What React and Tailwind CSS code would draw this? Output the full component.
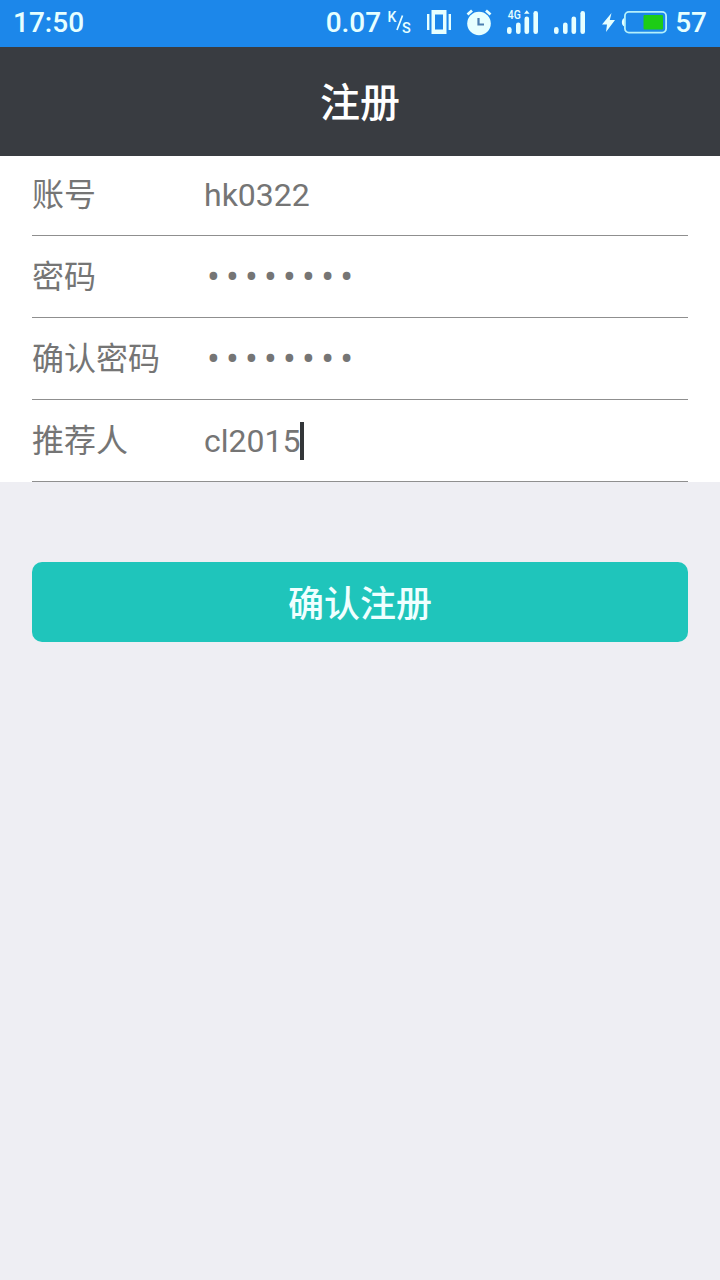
import clsx from 'clsx';

const fields = [
  { label: '账号', value: 'hk0322' },
  { label: '密码', value: '••••••••', secret: true },
  { label: '确认密码', value: '••••••••', secret: true },
  { label: '推荐人', value: 'cl2015', focused: true },
];

function NetSpeed() {
  return (
    <div className="flex items-center">
      <span className="pt-[2px]">0.07</span>
      <svg
        width="26"
        height="28"
        viewBox="0 0 26 28"
        className="ml-[6px] overflow-visible"
      >
        <text x="0.5" y="13.5" fontSize="14" fill="currentColor">
          K
        </text>
        <path d="M15.5 7.5 10 22" stroke="currentColor" strokeWidth="1.7" />
        <text x="15" y="24.5" fontSize="14.5" fill="currentColor">
          S
        </text>
      </svg>
    </div>
  );
}

function VibrateIcon() {
  return (
    <svg width="24" height="26" viewBox="0 0 24 26" fill="currentColor">
      <rect x="0" y="5" width="2.4" height="16" />
      <rect x="21.6" y="5" width="2.4" height="16" />
      <path fillRule="evenodd" d="M4.5 1h15v24h-15zM8 5.5v15h8v-15z" />
    </svg>
  );
}

function AlarmIcon() {
  return (
    <svg width="26" height="28" viewBox="0 0 26 28">
      <circle cx="13" cy="15.5" r="11.8" fill="currentColor" />
      <path
        d="M1.5 6.5 6 2.5M24.5 6.5 20 2.5"
        stroke="currentColor"
        strokeWidth="2.8"
      />
      <path
        d="M12.5 10v6.5H18"
        fill="none"
        stroke="#4a7fb0"
        strokeWidth="2.2"
      />
    </svg>
  );
}

function SignalIcon({ network }) {
  return (
    <svg width="32" height="26" viewBox="0 0 32 26" fill="currentColor">
      <rect x="0" y="18" width="4.6" height="7" rx="2.3" />
      <rect x="9" y="13.5" width="4.6" height="11.5" rx="2.3" />
      <rect x="17.5" y="7.5" width="4.6" height="17.5" rx="2.3" />
      <rect x="26.4" y="2" width="4.6" height="23" rx="2.3" />
      {network && (
        <>
          <text
            x="0.8"
            y="10"
            fontSize="12"
            textLength="13"
            lengthAdjust="spacingAndGlyphs"
          >
            {network}
          </text>
          <path d="M17 4.8 19.8 1.2 22.6 4.8z" />
        </>
      )}
    </svg>
  );
}

function BatteryIcon() {
  return (
    <svg width="66" height="26" viewBox="0 0 66 26">
      <path d="M9.5 4 0 15.5h5L4 23l9-12H7.8z" fill="currentColor" />
      <path d="M22.5 9c-3.5 1-3.5 7.5 0 8.5z" fill="currentColor" />
      <rect
        x="22.9"
        y="2.9"
        width="41.2"
        height="20.7"
        rx="4"
        fill="none"
        stroke="#b4f0fb"
        strokeWidth="1.8"
      />
      <rect x="41.5" y="6" width="19.5" height="14.5" rx="1" fill="#1dcc16" />
    </svg>
  );
}

function StatusBar() {
  return (
    <div className="flex h-[47px] items-center bg-[#1c87ea] px-[13px] pb-[3px] text-[28px] font-medium text-[#e6ffff]">
      <span className="pt-[2px]">17:50</span>
      <div className="ml-auto flex items-center">
        <NetSpeed />
        <div className="ml-[14px]">
          <VibrateIcon />
        </div>
        <div className="ml-[15px]">
          <AlarmIcon />
        </div>
        <div className="ml-[15px]">
          <SignalIcon network="4G" />
        </div>
        <div className="ml-[15px]">
          <SignalIcon />
        </div>
        <div className="ml-[16px]">
          <BatteryIcon />
        </div>
        <span className="ml-[7px] pt-[2px]">57</span>
      </div>
    </div>
  );
}

function Field({ label, value, secret, focused }) {
  return (
    <div className="flex h-[82px] items-center border-b border-[#8f8f8f] text-[32px] text-[#757575] first:h-[80px] first:pb-[2px]">
      <label className="w-[172px] shrink-0">{label}</label>
      <span
        className={clsx(
          secret && 'pt-px pl-[3px] text-[38px] leading-none tracking-[6.2px]'
        )}
      >
        {value}
      </span>
      {focused && <span className="h-[38px] w-[4px] bg-[#333639]" />}
    </div>
  );
}

export default function App() {
  return (
    <div className="min-h-screen bg-[#eeeef3] font-['Roboto','Noto_Sans_CJK_SC',sans-serif]">
      <StatusBar />
      <header className="flex h-[109px] items-center justify-center bg-[#393c41] pt-[5px] text-[40px] font-medium text-white">
        注册
      </header>
      <form className="bg-white px-8">
        {fields.map((field) => (
          <Field key={field.label} {...field} />
        ))}
      </form>
      <div className="px-8 pt-20">
        <button
          type="button"
          className="h-20 w-full rounded-[10px] bg-[#1fc5bb] pt-[6px] text-[36px] font-medium text-[#f0ffff]"
        >
          确认注册
        </button>
      </div>
    </div>
  );
}
